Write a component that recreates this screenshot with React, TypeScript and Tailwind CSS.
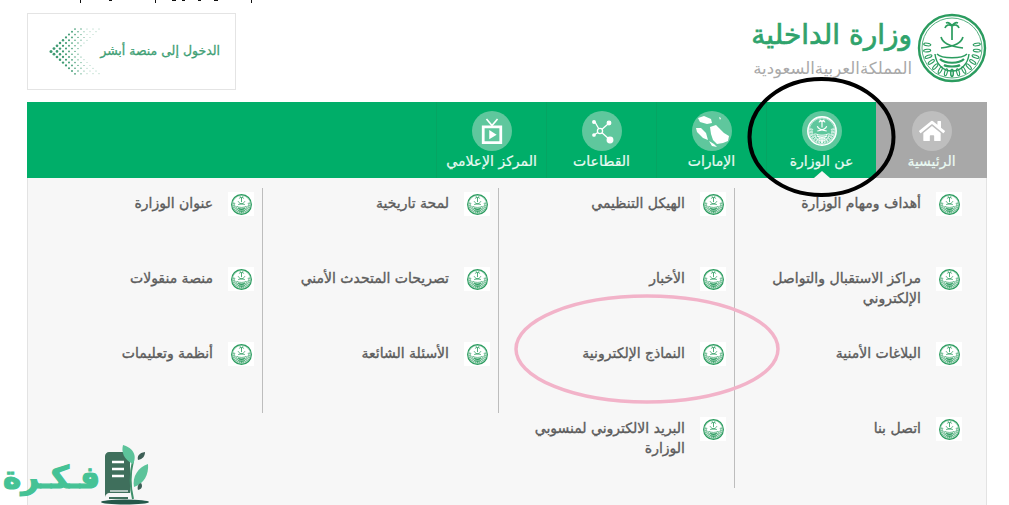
import { FaHome } from 'react-icons/fa';

const ARABIC = "font-['DejaVu_Sans',sans-serif]";

function Emblem({ size, color = '#2b9c5f' }: { size: number; color?: string }) {
  const leaves = [-80, -66, -52, -38, -24, -10, 4, 18];
  // small copies need heavier lines to stay readable
  const k = size < 35 ? 1.6 : 1;
  return (
    <svg width={size} height={size} viewBox="0 0 70 70" fill="none" stroke={color}>
      <circle cx="35" cy="35" r="33" strokeWidth={2.4 * k} />
      <circle cx="35" cy="35" r="30" strokeWidth={0.8 * k} />
      {leaves.map((a) => (
        <g key={a}>
          <ellipse cx="35" cy="10" rx="1.3" ry="3.6" strokeWidth={1.1 * k} transform={`rotate(${a + 162} 35 35)`} />
          <ellipse cx="35" cy="10" rx="1.3" ry="3.6" strokeWidth={1.1 * k} transform={`rotate(${198 - a} 35 35)`} />
        </g>
      ))}
      <path d="M35 27V13M35 13c-3-2-6-1-7 2M35 13c3-2 6-1 7 2M35 13c-2-3-4-4-6-3M35 13c2-3 4-4 6-3" strokeWidth={1.7 * k} />
      <path d="M24 24c2 6 7 9 22 11M46 24c-2 6-7 9-22 11" strokeWidth={1.7 * k} />
      <path d="M20 41c5 5 25 5 30 0" strokeWidth={1.4 * k} />
      <path d="M18 41c1 10 8 17 17 17s16-7 17-17" strokeWidth={1.4 * k} />
      <path d="M23 46c5 5 19 5 24 0M27 52c3 2 13 2 16 0" strokeWidth={2.2 * k} />
    </svg>
  );
}

function MapIcon() {
  return (
    <svg width="34" height="34" viewBox="0 0 34 34" fill="#fff">
      <path d="M3 4l6-2 7 3 1 4-5 1-7-2z" />
      <path d="M1 14l5 0 5 5 2 7-5-2-6-6z" />
      <path d="M15 13l6-2 3 3 5 5 5 3-1 5-5 2-6 1-4-4-2-6z" />
      <path d="M14 27l5 3 3 3-5-1z" />
      <path d="M24 3l2 1-1 2z" />
    </svg>
  );
}

function ShareIcon() {
  return (
    <svg width="24" height="28" viewBox="0 0 24 28" fill="#fff" stroke="#fff" strokeWidth="1.3">
      <path d="M10 14L5 5M10 14L18 7M10 14L19 22M10 14L4 18" />
      <circle cx="4" cy="5" r="1.3" />
      <circle cx="19" cy="6" r="1.8" />
      <circle cx="20" cy="23" r="2.8" />
      <circle cx="4" cy="18" r="1.2" />
      <circle cx="10" cy="14" r="2.6" fill="#5fc79d" />
    </svg>
  );
}

function TvIcon() {
  return (
    <svg width="24" height="28" viewBox="0 0 26 30" fill="#fff">
      <path d="M7 2l6 7 6-7" fill="none" stroke="#fff" strokeWidth="1.8" />
      <path fillRule="evenodd" d="M2 9h22v20H2zM5 12v14h16V12z" />
      <path d="M10 14l8 5-8 5z" />
    </svg>
  );
}

const tabs = [
  { label: 'الرئيسية', icon: <FaHome className="text-white" size={26} />, gray: true },
  { label: 'عن الوزارة', icon: <Emblem size={30} color="#ffffff" />, active: true },
  { label: 'الإمارات', icon: <MapIcon /> },
  { label: 'القطاعات', icon: <ShareIcon /> },
  { label: 'المركز الإعلامي', icon: <TvIcon /> },
];

const columns = [
  { w: 'w-[252px]', pad: 'pr-[24px]', line: 'h-[300px]', items: ['أهداف ومهام الوزارة', 'مراكز الاستقبال والتواصل الإلكتروني', 'البلاغات الأمنية', 'اتصل بنا'] },
  { w: 'w-[236px]', pad: 'pr-[8px]', line: 'h-[225px]', items: ['الهيكل التنظيمي', 'الأخبار', 'النماذج الإلكترونية', 'البريد الالكتروني لمنسوبي الوزارة'] },
  { w: 'w-[236px]', pad: 'pr-[8px]', line: 'h-[225px]', items: ['لمحة تاريخية', 'تصريحات المتحدث الأمني', 'الأسئلة الشائعة'] },
  { w: 'w-[234px]', pad: 'pr-[8px]', line: '', items: ['عنوان الوزارة', 'منصة منقولات', 'أنظمة وتعليمات'] },
];

function AbsherDots() {
  const dots: { x: number; y: number; r: number }[] = [];
  for (let row = 0; row < 17; row++) {
    const dist = Math.abs(row - 8);
    for (let i = 0; i < 5; i++) {
      dots.push({ x: 2 + dist * 3 + i * 6, y: 2 + row * 2.8, r: Math.max(0.45, 1.5 - i * 0.2 - dist * 0.08) });
    }
  }
  return (
    <svg width="52" height="50" viewBox="0 0 52 50" fill="#3f9b73" className="-mr-[1px] shrink-0">
      {dots.map((d, i) => (
        <circle key={i} cx={d.x} cy={d.y} r={d.r} />
      ))}
    </svg>
  );
}

function FikraLogo() {
  return (
    <div dir="ltr" className="absolute left-0 top-[445px] flex items-end">
      <span dir="rtl" className="w-[100px] whitespace-nowrap text-[31px] font-bold leading-[56px] text-[#45c295] [-webkit-text-stroke:1.2px_#45c295]">فـكـرة</span>
      <svg width="50" height="60" viewBox="0 0 50 60">
        <path d="M9 7h21v41H10c-3 0-5 2-5 5V11c0-2 2-4 4-4z" fill="#3f6f5c" />
        <path d="M12 17h12M12 24h12M12 31h12" stroke="#fff" strokeWidth="2.6" />
        <path d="M10 46h18" stroke="#fff" strokeWidth="1.2" />
        <path d="M9 53h19" stroke="#3f6f5c" strokeWidth="2" />
        <path d="M33 54c-3-12-3-26 0-38" stroke="#3f8f6a" strokeWidth="2" fill="none" />
        <path d="M33 19C24 15 21 7 23 0c8 2 15 9 10 19z" fill="#5cc39a" />
        <path d="M34 42c-2-10 4-20 14-23 1 10-4 20-14 23z" fill="#5cc39a" />
        <path d="M38 15c-1-4 1-7 7-8 0 4-2 7-7 8zM38 45c-1-3 0-6 3-7 2 3 1 6-3 7z" fill="#3d5f56" />
        <ellipse cx="25" cy="57" rx="24" ry="2.5" fill="#24584a" />
      </svg>
    </div>
  );
}

export default function App() {
  return (
    <div dir="rtl" className={`relative h-[505px] w-[1009px] overflow-hidden bg-white ${ARABIC}`}>
      <svg width="260" height="3" className="absolute left-0 top-0" fill="#111">
        <path d="M80 0h1v3h-1zM155 0h1v3h-1zM251 0h1v3h-1zM109 0h3v1h-3zM172 0h4v1h-4zM182 0h3v1h-3zM198 0h3v1h-3zM214 0h4v1h-4z" />
      </svg>

      <header className="flex h-[102px] items-start justify-between pl-[27px] pr-[22px] pt-[13px]">
        <div className="flex gap-[5px]">
          <Emblem size={70} />
          <div className="flex flex-col items-start pt-[3px]">
            <span className="whitespace-nowrap text-[28px] leading-[38px] text-[#2fa36c] [-webkit-text-stroke:0.7px_#2fa36c]">وزارة الداخلية</span>
            <span className="mt-[5px] whitespace-nowrap text-[16.5px] leading-[20px] text-[#a9a9a9]">المملكةالعربيةالسعودية</span>
          </div>
        </div>
        <a className="flex h-[77px] w-[209px] items-center border border-[#e4e4e4] pr-[15px]">
          <span className="whitespace-nowrap text-[12.5px] text-[#3f9f75] [-webkit-text-stroke:0.3px_#3f9f75]">الدخول إلى منصة أبشر</span>
          <AbsherDots />
        </a>
      </header>

      <nav className="ml-[27px] mr-[22px] flex h-[76px] bg-[#00ae69]">
        {tabs.map((t) => (
          <div
            key={t.label}
            className={`relative flex flex-col items-center pt-[9px] ${t.gray ? 'w-[111px] bg-[#a8a8a8]' : 'w-[110px] border-l border-[#05a563]'}`}
          >
            <div className={`flex h-[40px] w-[40px] items-center justify-center rounded-full ${t.gray ? 'bg-[#bebebe]' : 'bg-[#5fc79d]'}`}>
              {t.icon}
            </div>
            <span className="whitespace-nowrap text-[14px] leading-[20px] text-[#eafaf3] [-webkit-text-stroke:0.2px_#eafaf3]">{t.label}</span>
            {t.active && (
              <div className="absolute bottom-0 left-1/2 h-0 w-0 -translate-x-1/2 border-x-[8px] border-b-[7px] border-x-transparent border-b-[#f7f7f7]" />
            )}
          </div>
        ))}
      </nav>

      <main className="ml-[27px] mr-[22px] flex h-[327px] border-x border-[#e3e3e3] bg-[#f7f7f7] pt-[10px]">
        {columns.map((c, ci) => (
          <div key={ci} className={`relative ${c.w} shrink-0`}>
            {c.line && <div className={`absolute left-0 top-0 w-px bg-[#bdbdbd] ${c.line}`} />}
            {c.items.map((item) => (
              <div key={item} className={`flex h-[75px] items-start gap-[15px] pt-[4px] ${c.pad}`}>
                <div className="flex h-[24px] w-[26px] shrink-0 items-center justify-center bg-white">
                  <Emblem size={21} />
                </div>
                <span className="w-[170px] pt-[1px] text-[14px] leading-[20px] text-[#5c5c5c] [-webkit-text-stroke:0.35px_#5c5c5c]">{item}</span>
              </div>
            ))}
          </div>
        ))}
      </main>

      {/* hand drawn marks over the screenshot */}
      <svg width="1009" height="505" className="pointer-events-none absolute left-0 top-0" fill="none">
        <ellipse cx="821.5" cy="137" rx="72" ry="58" stroke="#000" strokeWidth="4" />
        <ellipse cx="647" cy="349" rx="131" ry="53" stroke="#f2b3c9" strokeWidth="3.5" />
      </svg>

      <FikraLogo />
    </div>
  );
}
